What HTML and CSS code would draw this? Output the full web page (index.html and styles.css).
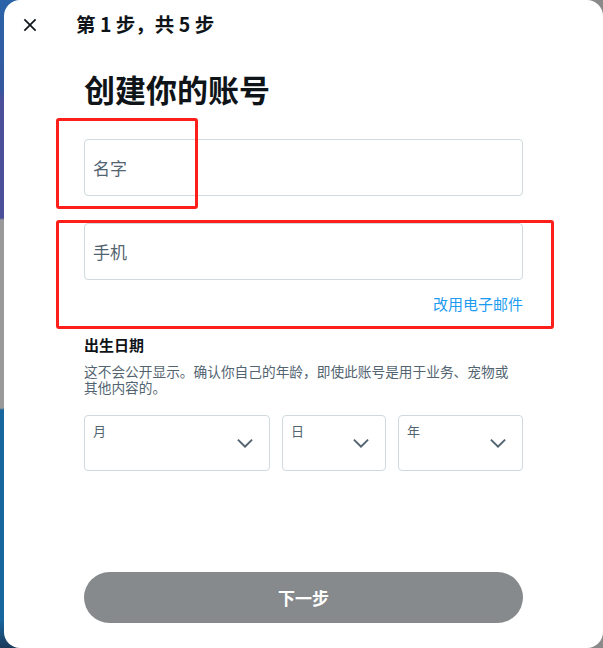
FILE: index.html
```html
<!DOCTYPE html>
<html lang="zh-CN">
<head>
<meta charset="utf-8">
<title>创建你的账号</title>
<link rel="stylesheet" href="styles.css">
</head>
<body>
<div class="dialog">
  <header class="topbar">
    <button class="close" aria-label="关闭">
      <svg viewBox="0 0 24 24" width="20" height="20"><path d="M10.59 12L4.54 5.96l1.42-1.42L12 10.59l6.04-6.05 1.42 1.42L13.41 12l6.05 6.04-1.42 1.42L12 13.41l-6.04 6.05-1.42-1.42L10.59 12z"/></svg>
    </button>
    <h2 class="step">第 1 步，共 5 步</h2>
  </header>
  <main class="content">
    <h1 class="title">创建你的账号</h1>
    <div class="field field-name"><span class="placeholder">名字</span></div>
    <div class="field field-phone"><span class="placeholder">手机</span></div>
    <div class="switch"><a class="link">改用电子邮件</a></div>
    <h3 class="dob-title">出生日期</h3>
    <p class="dob-desc">这不会公开显示。确认你自己的年龄，即使此账号是用于业务、宠物或其他内容的。</p>
    <div class="dob-row">
      <div class="select sel-month"><span class="sel-label">月</span><svg class="chev" viewBox="0 0 24 24" width="22" height="22"><path d="M3.543 8.96l1.414-1.42L12 14.59l7.043-7.05 1.414 1.42L12 17.41 3.543 8.96z"/></svg></div>
      <div class="select sel-day"><span class="sel-label">日</span><svg class="chev" viewBox="0 0 24 24" width="22" height="22"><path d="M3.543 8.96l1.414-1.42L12 14.59l7.043-7.05 1.414 1.42L12 17.41 3.543 8.96z"/></svg></div>
      <div class="select sel-year"><span class="sel-label">年</span><svg class="chev" viewBox="0 0 24 24" width="22" height="22"><path d="M3.543 8.96l1.414-1.42L12 14.59l7.043-7.05 1.414 1.42L12 17.41 3.543 8.96z"/></svg></div>
    </div>
  </main>
  <footer class="footer">
    <button class="next">下一步</button>
  </footer>
  <div class="mark mark-1"></div>
  <div class="mark mark-2"></div>
</div>
</body>
</html>
```
FILE: styles.css
```css
* { box-sizing: border-box; }
html, body { margin: 0; padding: 0; }
body {
  width: 603px;
  height: 648px;
  overflow: hidden;
  font-family: "Noto Sans CJK SC", "Noto Sans", "Liberation Sans", sans-serif;
  color: #0f1419;
  background:
    linear-gradient(to bottom, #2a63a8 0, #35579f 90px, #4b4f99 100px, #4b4f99 218px, #9a9a9a 220px, #9a9a9a 408px, #17669f 410px, #17669f 620px, #1a3a5a 648px) left top / 20px 100% no-repeat,
    #8a8a8a;
}
.dialog {
  position: relative;
  margin-left: 4px;
  width: 599px;
  height: 648px;
  background: #fff;
  border-radius: 16px;
  display: flex;
  flex-direction: column;
}
.topbar {
  height: 48px;
  display: flex;
  align-items: center;
  padding-left: 16px;
}
.close {
  width: 20px;
  height: 20px;
  padding: 0;
  margin: 1px 36px 0 0;
  border: 0;
  background: none;
  display: flex;
}
.close svg { fill: #0f1419; }
.step {
  margin: 0;
  font-size: 19.5px;
  font-weight: 700;
  line-height: 24px;
}
.content {
  padding: 0 80px;
  display: flex;
  flex-direction: column;
}
.title {
  margin: 23px 0 0;
  font-size: 31px;
  line-height: 36px;
  font-weight: 700;
}
.field {
  height: 57px;
  border: 1px solid #cfd9de;
  border-radius: 4px;
  display: flex;
  align-items: center;
  padding-left: 8px;
}
.field-name { margin-top: 32px; }
.field-phone { margin-top: 27px; }
.placeholder {
  font-size: 17px;
  color: #536471;
  line-height: 20px;
}
.switch {
  margin-top: 14px;
  display: flex;
  justify-content: flex-end;
}
.link {
  font-size: 15px;
  line-height: 20px;
  color: #1d9bf0;
}
.dob-title {
  margin: 21px 0 0;
  font-size: 15px;
  line-height: 20px;
  font-weight: 700;
}
.dob-desc {
  margin: 8px 0 0;
  padding-right: 10px;
  font-size: 13.7px;
  line-height: 16px;
  color: #536471;
}
.dob-row {
  margin-top: 20px;
  display: flex;
  gap: 12px;
}
.select {
  height: 56px;
  border: 1px solid #cfd9de;
  border-radius: 4px;
  display: flex;
  justify-content: space-between;
  padding: 7px 13px 0 8px;
}
.sel-month { width: 186px; }
.sel-day { width: 104px; }
.sel-year { width: 125px; }
.sel-label {
  font-size: 13px;
  line-height: 16px;
  color: #536471;
}
.chev {
  fill: #536471;
  margin-top: 9px;
}
.footer {
  margin-top: auto;
  padding: 0 80px 25px;
}
.next {
  width: 100%;
  height: 51px;
  border: 0;
  border-radius: 26px;
  background: #878a8c;
  color: #fff;
  font-family: "Noto Sans CJK SC", "Noto Sans", sans-serif;
  font-size: 17px;
  font-weight: 700;
}
.mark {
  position: absolute;
  border: 3px solid #ff1f1a;
  border-radius: 3px;
  pointer-events: none;
}
.mark-1 { left: 52px; top: 118px; width: 142px; height: 91px; }
.mark-2 { left: 52px; top: 220px; width: 498px; height: 109px; }
```
